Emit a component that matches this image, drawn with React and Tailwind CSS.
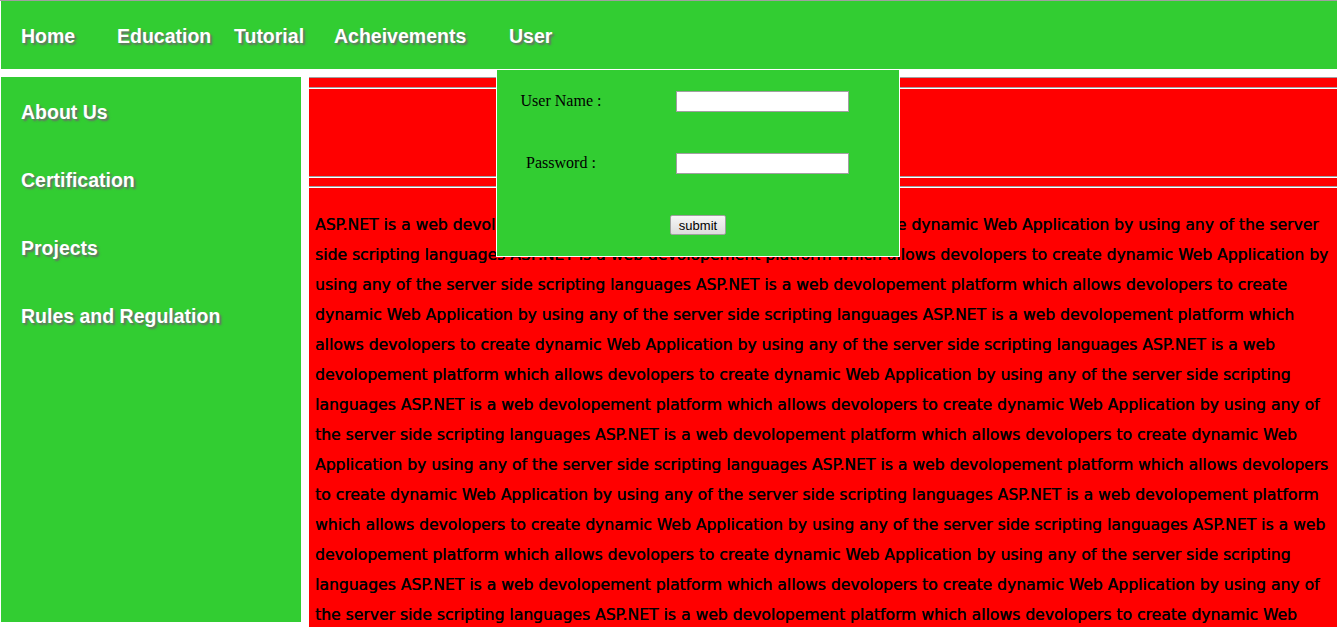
const navItems = [
  { label: 'Home', w: 'w-[96px]' },
  { label: 'Education', w: 'w-[117px]' },
  { label: 'Tutorial', w: 'w-[100px]' },
  { label: 'Acheivements', w: 'w-[175px]' },
  { label: 'User', w: 'w-[80px]' },
];

const sideItems = ['About Us', 'Certification', 'Projects', 'Rules and Regulation'];

const lines = [
  'ASP.NET is a web devolopement platform which allows devolopers to create dynamic Web Application by using any of the server',
  'side scripting languages ASP.NET is a web devolopement platform which allows devolopers to create dynamic Web Application by',
  'using any of the server side scripting languages ASP.NET is a web devolopement platform which allows devolopers to create',
  'dynamic Web Application by using any of the server side scripting languages ASP.NET is a web devolopement platform which',
  'allows devolopers to create dynamic Web Application by using any of the server side scripting languages ASP.NET is a web',
  'devolopement platform which allows devolopers to create dynamic Web Application by using any of the server side scripting',
  'languages ASP.NET is a web devolopement platform which allows devolopers to create dynamic Web Application by using any of',
  'the server side scripting languages ASP.NET is a web devolopement platform which allows devolopers to create dynamic Web',
  'Application by using any of the server side scripting languages ASP.NET is a web devolopement platform which allows devolopers',
  'to create dynamic Web Application by using any of the server side scripting languages ASP.NET is a web devolopement platform',
  'which allows devolopers to create dynamic Web Application by using any of the server side scripting languages ASP.NET is a web',
  'devolopement platform which allows devolopers to create dynamic Web Application by using any of the server side scripting',
  'languages ASP.NET is a web devolopement platform which allows devolopers to create dynamic Web Application by using any of',
  'the server side scripting languages ASP.NET is a web devolopement platform which allows devolopers to create dynamic Web',
];

export default function App() {
  return (
    <div className="relative w-[1337px] h-[627px] overflow-hidden bg-white font-['Comic_Sans_MS','Liberation_Sans',sans-serif]">
      <div className="h-px bg-[#a0a0a0]" />

      {/* top menu */}
      <div className="ml-px h-[68px] bg-[#32cd32] flex items-center pl-[20px] pt-[4px]">
        {navItems.map((n) => (
          <div
            key={n.label}
            className={`${n.w} shrink-0 text-white font-bold text-[19.5px] [text-shadow:2px_2px_2px_#6b6b6b]`}
          >
            {n.label}
          </div>
        ))}
      </div>

      <div className="h-[8px]" />

      <div className="flex">
        {/* side menu */}
        <div className="ml-px w-[300px] h-[545px] bg-[#32cd32] pt-[2px] flex flex-col">
          {sideItems.map((s) => (
            <div
              key={s}
              className="h-[68px] flex items-center pl-[20px] text-white font-bold text-[19.5px] [text-shadow:2px_2px_2px_#6b6b6b]"
            >
              {s}
            </div>
          ))}
        </div>

        <div className="w-[8px]" />

        {/* content */}
        <div className="flex-1 h-[550px] bg-[#ff0000] border-t border-[#a0a0a0]">
          <div className="h-[9px]" />
          <div className="border-t border-[#a0a0a0] border-b border-b-white" />
          <div className="h-[87px]" />
          <div className="border-t border-[#a0a0a0] border-b border-b-white" />
          <div className="h-[8px]" />
          <div className="border-t border-[#a0a0a0] border-b border-b-white" />
          <div className="pt-[22px] pl-[6px] font-['DejaVu_Sans',sans-serif] text-[15.6px] leading-[30px] text-black [text-shadow:0.3px_0_0_#000]">
            {lines.map((l, i) => (
              <div key={i} className="whitespace-nowrap">{l}</div>
            ))}
          </div>
        </div>
      </div>

      {/* login dropdown */}
      <div className="absolute left-[496px] top-[69px] w-[404px] h-[188px] bg-[#32cd32] border border-white font-['Liberation_Serif',serif] text-[16px] text-black">
        <div className="h-[62px] flex items-center">
          <div className="w-[128px] text-center">User Name :</div>
          <input className="ml-[51px] w-[173px] h-[21px] bg-white border border-[#a0a0a0] outline-none" />
        </div>
        <div className="h-[62px] flex items-center">
          <div className="w-[128px] text-center">Password :</div>
          <input type="password" className="ml-[51px] w-[173px] h-[21px] bg-white border border-[#a0a0a0] outline-none" />
        </div>
        <div className="h-[62px] flex items-center pl-[173px]">
          <button className="w-[56px] h-[20px] border border-[#a0a0a0] rounded-[2px] bg-gradient-to-b from-[#f6f6f6] to-[#dddddd] font-['Liberation_Sans',sans-serif] text-[13px] leading-none text-black">
            submit
          </button>
        </div>
      </div>
    </div>
  );
}
